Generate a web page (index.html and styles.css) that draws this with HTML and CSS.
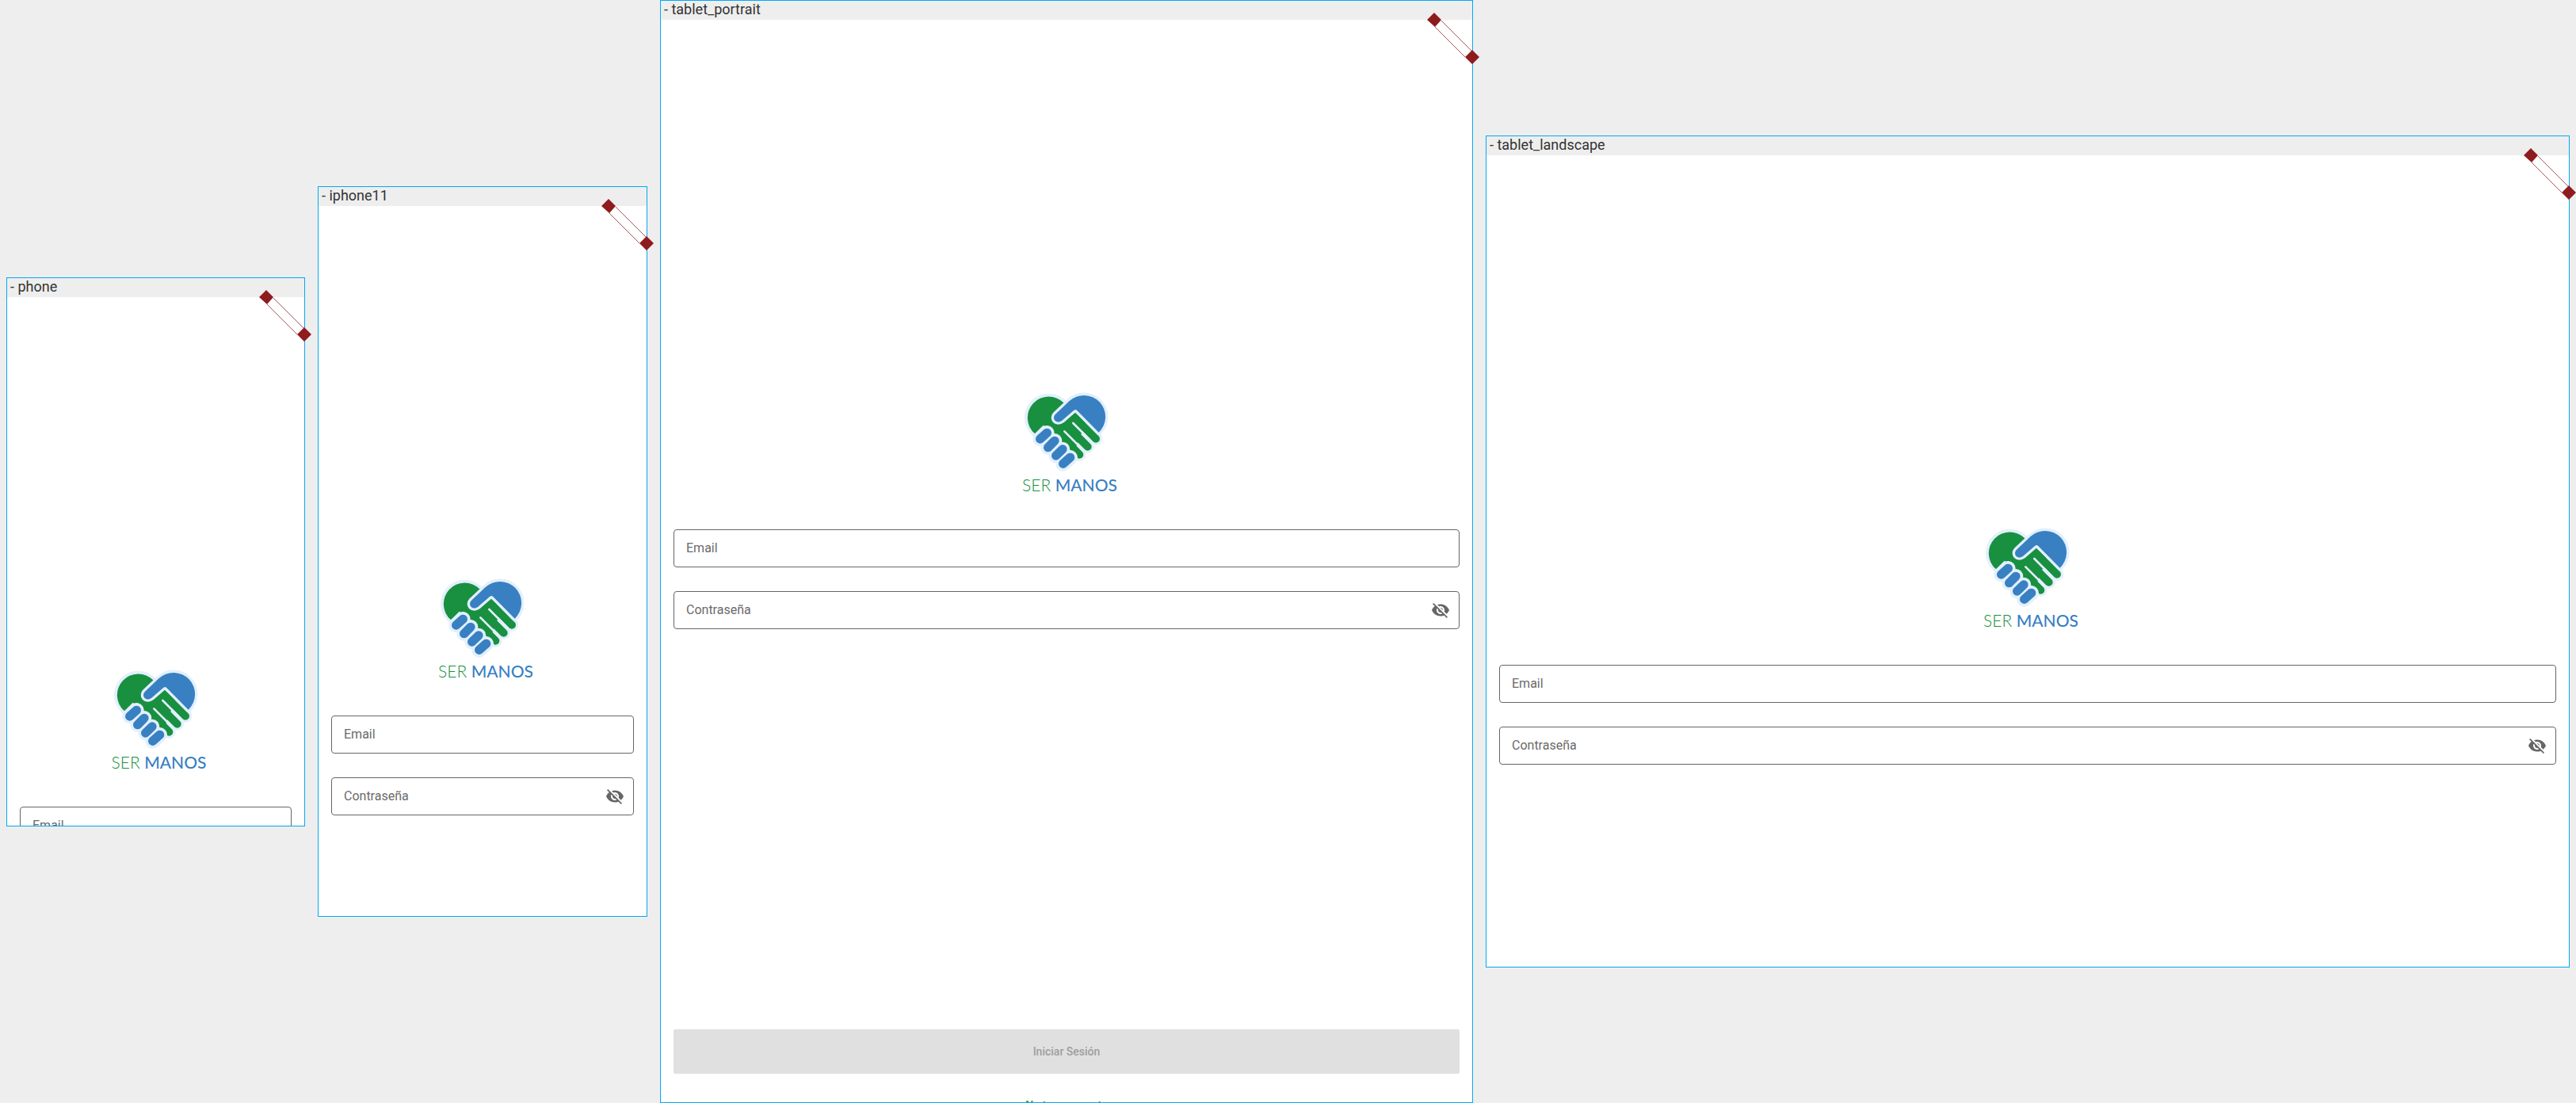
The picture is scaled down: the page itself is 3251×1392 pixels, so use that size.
FILE: index.html
```
<!DOCTYPE html>
<html lang="es">
<head>
<meta charset="utf-8">
<meta name="viewport" content="width=device-width, initial-scale=1">
<title>Ser Manos</title>
<link rel="stylesheet" href="styles.css">
</head>
<body>
<svg class="defs" aria-hidden="true">
  <symbol id="hands" viewBox="60 40 360 300">
    <g class="halo">
      <circle cx="160" cy="136" r="91"/>
      <circle cx="292" cy="136" r="91"/>
      <path d="M150 180 226 100 300 160 270 260 240 250Z"/>
      <path class="line-50" d="M262 139 339 216M231 169 308 246M201 200 277 276"/>
    </g>
    <g class="green">
      <path d="M108 197A80 80 0 1 1 217 80L262 118 300 156 265 245 240 262 160 180 140 165Z"/>
      <path class="line-30" d="M262 139 339 216M231 169 308 246M201 200 277 276"/>
    </g>
    <path class="halo line-8" d="M253 157 323 227M220 188 291 259"/>
    <path class="blue-edge" d="M350 192 267 108Q262 104 256 108L211 147C202 154 191 154 184 147C178 140 179 130 186 123L238 74A80 80 0 0 1 350 192Z"/>
    <path class="halo line-56" d="M128 217 154 194M158 249 183 224M188 280 213 256M215 311 242 287"/>
    <path class="blue line-34" d="M128 217 154 194M158 249 183 224M188 280 213 256M215 311 242 287"/>
  </symbol>
  <symbol id="banner" viewBox="0 0 66 66">
    <path fill="#fff" d="M10 18 18 10 56 47 48 55Z"/>
    <path fill="none" stroke="#a85a5c" d="M10 18 48 56M18 10 56 48"/>
    <path fill="#8e1c1e" d="M0 9 9 0 18 9 10 18ZM48 56 57 47 66 56 57 65Z"/>
  </symbol>
  <symbol id="eye-off" viewBox="0 0 24 24">
    <path fill="#666" d="M12 7c2.76 0 5 2.240 5 5 0 .65-.13 1.260-.36 1.830l2.920 2.920c1.510-1.260 2.700-2.890 3.430-4.750-1.730-4.390-6-7.500-11-7.500-1.400 0-2.740.25-3.980.7l2.160 2.160C10.740 7.130 11.350 7 12 7zM2 4.270l2.280 2.280.46.46C3.080 8.300 1.780 10.020 1 12c1.730 4.390 6 7.500 11 7.500 1.550 0 3.030-.3 4.380-.84l.42.42L19.730 22 21 20.730 3.270 3 2 4.270zM7.530 9.800l1.550 1.550c-.05.21-.08.43-.08.65 0 1.660 1.340 3 3 3 .22 0 .44-.03.65-.08l1.550 1.550c-.67.33-1.410.53-2.200.53-2.760 0-5-2.240-5-5 0-.79.2-1.530.53-2.200zm4.310-.78l3.150 3.150.02-.16c0-1.660-1.340-3-3-3l-.17.01z"/>
  </symbol>
</svg>
<main class="devices">
  <section class="device">
    <h2 class="device-name">- phone</h2>
    <form class="screen phone">
      <div class="logo"><svg class="hands"><use href="#hands"/></svg><p class="brand"><span class="ser">SER</span> <span class="manos">MANOS</span></p></div>
      <div class="field"><input type="email" aria-label="Email" placeholder="Email"></div>
      <div class="field"><input type="password" aria-label="Contraseña" placeholder="Contraseña"><button class="toggle" type="button" aria-label="Mostrar contraseña"><svg><use href="#eye-off"/></svg></button></div>
    </form>
    <svg class="banner"><use href="#banner"/></svg>
  </section>
  <section class="device">
    <h2 class="device-name">- iphone11</h2>
    <form class="screen iphone">
      <div class="logo"><svg class="hands"><use href="#hands"/></svg><p class="brand"><span class="ser">SER</span> <span class="manos">MANOS</span></p></div>
      <div class="field"><input type="email" aria-label="Email" placeholder="Email"></div>
      <div class="field"><input type="password" aria-label="Contraseña" placeholder="Contraseña"><button class="toggle" type="button" aria-label="Mostrar contraseña"><svg><use href="#eye-off"/></svg></button></div>
    </form>
    <svg class="banner"><use href="#banner"/></svg>
  </section>
  <section class="device">
    <h2 class="device-name">- tablet_portrait</h2>
    <form class="screen portrait">
      <div class="logo"><svg class="hands"><use href="#hands"/></svg><p class="brand"><span class="ser">SER</span> <span class="manos">MANOS</span></p></div>
      <div class="field"><input type="email" aria-label="Email" placeholder="Email"></div>
      <div class="field"><input type="password" aria-label="Contraseña" placeholder="Contraseña"><button class="toggle" type="button" aria-label="Mostrar contraseña"><svg><use href="#eye-off"/></svg></button></div>
      <div class="actions">
        <button class="login" type="submit" disabled>Iniciar Sesión</button>
        <button class="register" type="button">No tengo cuenta</button>
      </div>
    </form>
    <svg class="banner"><use href="#banner"/></svg>
  </section>
  <section class="device">
    <h2 class="device-name">- tablet_landscape</h2>
    <form class="screen landscape">
      <div class="logo"><svg class="hands"><use href="#hands"/></svg><p class="brand"><span class="ser">SER</span> <span class="manos">MANOS</span></p></div>
      <div class="field"><input type="email" aria-label="Email" placeholder="Email"></div>
      <div class="field"><input type="password" aria-label="Contraseña" placeholder="Contraseña"><button class="toggle" type="button" aria-label="Mostrar contraseña"><svg><use href="#eye-off"/></svg></button></div>
    </form>
    <svg class="banner"><use href="#banner"/></svg>
  </section>
</main>
</body>
</html>
```
FILE: styles.css
```
* { box-sizing: border-box; }

body {
  margin: 0;
  background: #eee;
  font-family: Roboto, "Liberation Sans", sans-serif;
}

.defs { display: none; }

.devices {
  display: grid;
  grid-template-columns: 377fr 416fr 1026fr 1368fr;
  align-items: center;
  gap: 16px;
  padding: 0 8px;
}

.device {
  position: relative;
  min-width: 0;
  border: 1px solid #03a9f4;
}

.device-name {
  margin: 0;
  padding: 0 4px;
  height: 24px;
  font-size: 18px;
  font-weight: 400;
  line-height: 22px;
  color: #333;
}

.screen {
  display: flex;
  flex-direction: column;
  gap: 30px;
  padding: 470px 16px 0;
  background: #fff;
  overflow: hidden;
}

.phone { aspect-ratio: 375 / 667; min-height: 0; max-height: 667px; }
.iphone { aspect-ratio: 414 / 896; }
.portrait { aspect-ratio: 1024 / 1366; }
.landscape { aspect-ratio: 1366 / 1024; }

.logo {
  display: flex;
  flex-direction: column;
  align-items: center;
  flex: none;
  height: 143px;
  padding-left: 8px;
}

.hands { width: 120px; height: 100px; flex: none; }

.brand {
  margin: 0;
  font-family: Lato, "Liberation Sans", sans-serif;
  font-size: 21px;
  line-height: 34px;
  white-space: nowrap;
}

.ser { color: #189040; font-weight: 300; }
.manos { color: #3880c2; font-weight: 500; }

.halo { fill: #e2f0fc; stroke: #e2f0fc; stroke-linecap: round; }
.halo circle, .halo path { stroke-width: 0; }
.green { fill: #189040; stroke: #189040; stroke-width: 0; stroke-linecap: round; }
.blue { fill: none; stroke: #3880c2; stroke-linecap: round; }
.blue-edge { fill: #3880c2; stroke: #e2f0fc; stroke-width: 20px; stroke-linejoin: round; paint-order: stroke; }
.line-8 { stroke-width: 8px; }
.green .line-30 { stroke-width: 30px; }
.line-34 { stroke-width: 34px; }
.halo .line-50 { stroke-width: 50px; }
.line-56 { stroke-width: 56px; }

.field {
  display: flex;
  align-items: center;
  flex: none;
  height: 48px;
  padding: 0 11px 0 15px;
  border: 1px solid #666;
  border-radius: 4px;
}

.field input {
  flex: 1;
  min-width: 0;
  padding: 0;
  border: 0;
  outline: 0;
  background: none;
  font: 16px/24px Roboto, "Liberation Sans", sans-serif;
  color: #222;
}

.field input::placeholder { color: #6b6b6b; opacity: 1; }

.toggle { padding: 0; border: 0; background: none; height: 24px; }
.toggle svg { display: block; width: 24px; height: 24px; }

.actions {
  display: flex;
  flex-direction: column;
  gap: 28px;
  margin-top: auto;
}

.actions button {
  border: 0;
  font: 500 14px/20px Roboto, "Liberation Sans", sans-serif;
}

.login {
  height: 56px;
  border-radius: 2px;
  background: #e0e0e0;
  color: #9e9e9e;
}

/* The last action runs past the lower edge of the screen. */
.register {
  align-self: center;
  height: 24px;
  margin-bottom: -16px;
  padding: 0;
  background: none;
  color: #189040;
}

.banner {
  position: absolute;
  top: 15px;
  right: -9px;
  width: 66px;
  height: 66px;
}
```
